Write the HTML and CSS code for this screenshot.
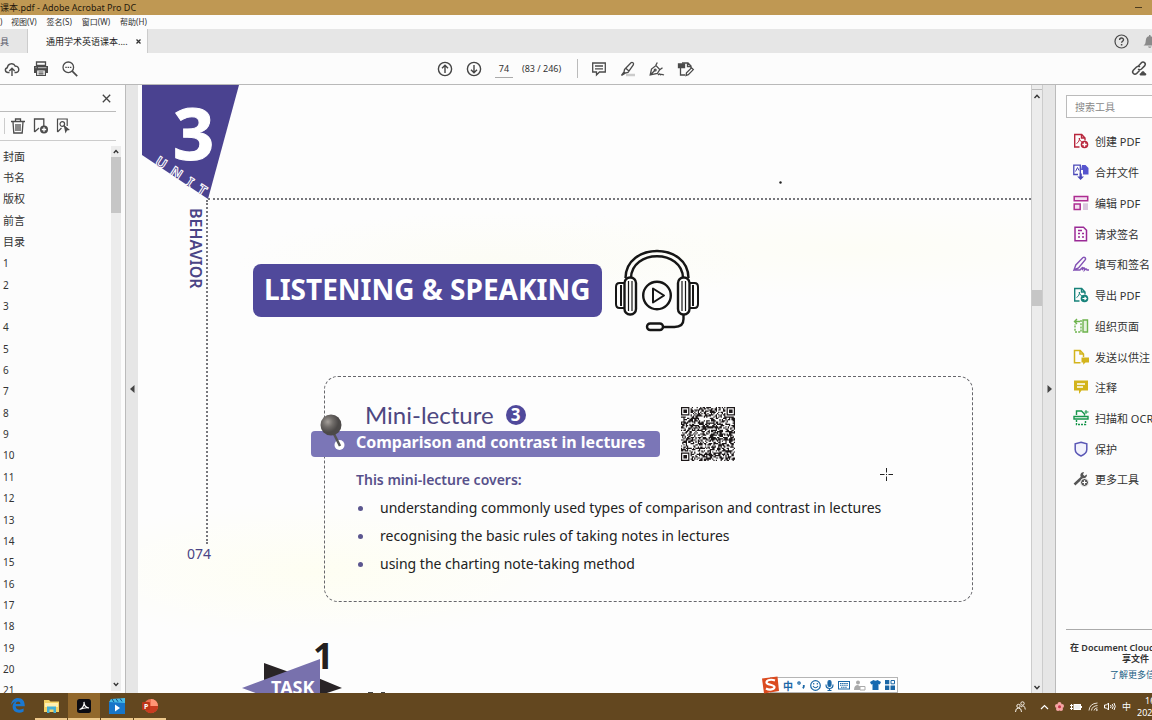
FILE: index.html
```html
<!DOCTYPE html>
<html lang="zh-CN">
<head>
<meta charset="utf-8">
<title>课本.pdf - Adobe Acrobat Pro DC</title>
<link rel="stylesheet" href="styles.css">
</head>
<body>
<div class="app">
  <header class="titlebar"><span>课本.pdf - Adobe Acrobat Pro DC</span><button class="minimize" aria-label="最小化"></button></header>
  <nav class="menubar"><span class="menu-rest">)</span><button>视图(V)</button><button>签名(S)</button><button>窗口(W)</button><button>帮助(H)</button></nav>
  <div class="tabs">
    <button class="tab-tools">具</button>
    <div class="tab-file"><span>通用学术英语课本....</span><button class="tab-close" aria-label="关闭"><svg width="5" height="5" viewBox="0 0 5 5"><path d="M.5.5l4 4M4.500.5l-4 4" stroke="#333" stroke-width="1.300"/></svg></button></div>
    <div class="tab-right">
      <button aria-label="帮助"><svg width="15" height="15" viewBox="0 0 15 15" fill="none" stroke="#484848" stroke-width="1.200"><circle cx="7.500" cy="7.500" r="6.500"/><path d="M5.600 6c0-2.600 3.900-2.500 3.900-.2 0 1.400-1.900 1.500-1.900 3" stroke-width="1.400"/><path d="M7.600 10v1.500" stroke-width="1.500"/></svg></button>
      <button aria-label="通知"><svg width="15" height="15" viewBox="0 0 15 15" fill="#8a8a8a"><path d="M1.500 11.500c2-1 2-3 2.300-5.300C4.100 3.500 5.500 2.500 7 2.200V1h1.500v1.200c1.500.3 2.900 1.300 3.200 4 .3 2.300.3 4.300 2.300 5.300zM6 12.500h3.500c-.5 1.700-3 1.700-3.500 0z"/></svg></button>
    </div>
  </div>
  <div class="toolbar">
    <div class="tools-left">
      <button aria-label="上传"><svg width="16" height="16" viewBox="0 0 16 16" fill="none" stroke="#4b4b4b" stroke-width="1.400"><path d="M5.500 11.500H4C1 11.500.3 7.500 3.300 6.800 3.500 2.500 9.500 1 11.300 5.200c4.200-.5 4.700 6 .9 6.300h-1.700M8 15V7.500M5.300 10L8 7.300l2.700 2.700"/></svg></button>
      <button aria-label="打印"><svg width="16" height="16" viewBox="0 0 16 16"><path d="M3.500 1h9v3.500h-9z" fill="none" stroke="#4b4b4b" stroke-width="1.300"/><path d="M1 5h14v7h-2.500V9h-9v3H1z" fill="#4b4b4b"/><path d="M3.600 9h8.800v5.500H3.600zM5.500 11h5M5.500 12.800h5" fill="none" stroke="#4b4b4b" stroke-width="1.200"/><path d="M2.500 6.700h1M5 6.700h8.500" stroke="#ddd" stroke-width=".8"/></svg></button>
      <button aria-label="查找"><svg width="16" height="16" viewBox="0 0 16 16" fill="none" stroke="#4b4b4b"><circle cx="6.300" cy="6.300" r="5.300" stroke-width="1.300"/><path d="M10.200 10.200l5 5" stroke-width="1.700"/><path d="M3.300 6.300h1.500M5.600 6.300h1.500M7.900 6.300h1.500" stroke-width="1.300"/></svg></button>
    </div>
    <div class="tools-page">
      <button aria-label="上一页"><svg width="16" height="16" viewBox="0 0 16 16" fill="none" stroke="#444" stroke-width="1.400"><circle cx="8" cy="8" r="6.600"/><path d="M8 12V4.500M5 7.300l3-3 3 3"/></svg></button>
      <button aria-label="下一页"><svg width="16" height="16" viewBox="0 0 16 16" fill="none" stroke="#444" stroke-width="1.400"><circle cx="8" cy="8" r="6.600"/><path d="M8 4v7.500M5 8.700l3 3 3-3"/></svg></button>
      <input class="page-number" aria-label="页码" value="74">
      <span class="page-total">(83 / 246)</span>
      <span class="divider"></span>
      <button aria-label="添加附注"><svg width="16" height="16" viewBox="0 0 16 16" fill="none" stroke="#4b4b4b" stroke-width="1.300"><path d="M1.700 2h12.600v9H8.500l-3 3v-3H1.700zM4 5h8M4 7.800h8"/></svg></button>
      <button aria-label="高亮"><svg width="16" height="16" viewBox="0 0 16 16" fill="none" stroke="#4b4b4b" stroke-width="1.300"><path d="M6 14h9" stroke="#ccc" stroke-width="2.500"/><path d="M4.500 8.500L11 1.700c1.300-1 3.300.6 2.300 2.300L8 11.500l-2.800.6L4 11zM6 7.500l3 2.500M4 11l-2.500 3.500 3.700-2.400"/></svg></button>
      <button aria-label="签名"><svg width="16" height="16" viewBox="0 0 16 16" fill="none" stroke="#4b4b4b" stroke-width="1.300"><path d="M1.200 14L2.500 8 7 4.500l3.800 4-2.500 4zM1.200 14L5.500 9.800M6.800 4.300L8.300 1.500M10.800 8.700l2.700-2"/><circle cx="6.200" cy="9" r=".9"/><path d="M9 14c1.500-2 2.500-1 2 0 1-.8 2-.8 4 0"/></svg></button>
      <button aria-label="编辑"><svg width="16" height="16" viewBox="0 0 16 16" fill="none" stroke="#4b4b4b" stroke-width="1.300"><path d="M2.500 6.500V14H7M4 2h6l3 3v2.500M9.500 2v3.500H13"/><path d="M.5 3h6v3.500h-6z" fill="#4b4b4b"/><path d="M8 14.500l.5-2.700 5-5 1.800 1.800-5 5z"/></svg></button>
    </div>
    <button class="share" aria-label="共享链接"><svg width="17" height="17" viewBox="0 0 17 17" fill="none" stroke="#4b4b4b" stroke-width="1.500"><path d="M7.200 6.200l3-3.300c2.300-2.200 5.400.6 3.400 3L10.500 9c-1.300 1-2.600.9-3.400 0M8.500 10.500l-2.800 2.900c-2.300 2.100-5.400-.7-3.400-3.100L5.500 7c1.300-1 2.600-.9 3.400 0"/><path d="M9.500 15.500c-1.300-.1-1.300-2.300.4-2.500.8-2.400 3.700-2 4 0 1.800 0 1.900 2.300.4 2.500z" fill="#4b4b4b" stroke="none"/></svg></button>
  </div>

  <main class="workspace">
    <aside class="bookmarks">
      <div class="bm-head"><button aria-label="关闭书签"><svg width="9" height="9" viewBox="0 0 9 9"><path d="M.8.8l7.400 7.400M8.200.8L.8 8.200" stroke="#444" stroke-width="1.300"/></svg></button></div>
      <div class="bm-tools">
        <span class="bm-divider"></span>
        <button aria-label="删除"><svg width="14" height="16" viewBox="0 0 14 16" fill="none" stroke="#4b4b4b" stroke-width="1.300"><path d="M0 3.500h14M4.500 3.200V1h5v2.200M2 4l.8 11h8.400L12 4M5 6v7M7 6v7M9 6v7"/></svg></button>
        <button aria-label="新建书签"><svg width="16" height="16" viewBox="0 0 16 16" fill="none" stroke="#4b4b4b" stroke-width="1.300"><path d="M1.500 14V1h9.300v7M1.500 14l4.500-4"/><circle cx="11" cy="11.500" r="4" fill="#4b4b4b" stroke="none"/><path d="M11 9.300v4.400M8.800 11.500h4.400" stroke="#fff"/></svg></button>
        <button aria-label="定位书签"><svg width="14" height="16" viewBox="0 0 14 16" fill="none" stroke="#4b4b4b" stroke-width="1.200"><path d="M.5 14V1h9.700v7M.5 14l4-4"/><circle cx="5.300" cy="6" r="2.300"/><path d="M6.500 6.500l6.500 5.500-3 .5-1.500 3z" fill="#4b4b4b" stroke="none"/></svg></button>
      </div>
      <div class="bm-body">
        <ul class="bm-list">
          <li><a href="#">封面</a></li><li><a href="#">书名</a></li><li><a href="#">版权</a></li><li><a href="#">前言</a></li><li><a href="#">目录</a></li>
          <li class="num"><a href="#">1</a></li><li class="num"><a href="#">2</a></li><li class="num"><a href="#">3</a></li><li class="num"><a href="#">4</a></li><li class="num"><a href="#">5</a></li><li class="num"><a href="#">6</a></li><li class="num"><a href="#">7</a></li><li class="num"><a href="#">8</a></li><li class="num"><a href="#">9</a></li><li class="num"><a href="#">10</a></li><li class="num"><a href="#">11</a></li><li class="num"><a href="#">12</a></li><li class="num"><a href="#">13</a></li><li class="num"><a href="#">14</a></li><li class="num"><a href="#">15</a></li><li class="num"><a href="#">16</a></li><li class="num"><a href="#">17</a></li><li class="num"><a href="#">18</a></li><li class="num"><a href="#">19</a></li><li class="num"><a href="#">20</a></li><li class="num"><a href="#">21</a></li>
        </ul>
        <div class="scroll bm-scroll"><svg width="10" height="11" viewBox="0 0 10 11"><path d="M2.800 7L5 4.500 7.200 7" fill="none" stroke="#333" stroke-width="1.300"/></svg><div class="thumb"></div><svg class="down" width="10" height="11" viewBox="0 0 10 11"><path d="M2.800 3L5 5.500 7.200 3" fill="none" stroke="#333" stroke-width="1.300"/></svg></div>
      </div>
    </aside>
    <button class="gutter gutter-left" aria-label="收起书签"><svg width="5" height="8" viewBox="0 0 5 8"><path d="M4.500 0v8L0 4z" fill="#444"/></svg></button>

    <article class="page">
      <div class="page-top">
        <svg class="unit" width="66" height="114" viewBox="0 0 66 114"><path d="M0 0h97L66 114 0 70z" fill="#4a4290"/><text class="unit-number" x="31" y="75">3</text><g class="unit-word"><text transform="translate(12 79) rotate(33)">U</text><text transform="translate(27 89) rotate(33)">N</text><text transform="translate(43 100) rotate(33)">I</text><text transform="translate(54 107) rotate(33)">T</text></g></svg>
        <div class="top-rule"><svg width="3" height="3" viewBox="0 0 3 3"><circle cx="1.500" cy="1.500" r="1.200" fill="#222"/></svg></div>
      </div>
      <div class="page-main">
        <div class="side"><div class="rail"><span>BEHAVIOR</span></div><span class="folio">074</span></div>
        <div class="content">
          <div class="banner-row">
            <h1 class="banner">LISTENING &amp; SPEAKING</h1>
            <svg width="86" height="82" viewBox="0 0 86 82" fill="none" stroke="#161616" stroke-width="2.400"><path d="M11.500 28C12-8 74-8 74.500 28M17 28C17.500-1 68.500-1 69 28"/><rect x="10.500" y="27.500" width="11.500" height="37" rx="5.500"/><path d="M14.500 31v30M18 31v30" stroke-width="1.200"/><path d="M10 33H5.500Q2 33 2 37v17q0 4 3.500 4H10M7 35v21" stroke-width="2"/><rect x="64" y="27.500" width="11.500" height="37" rx="5.500"/><path d="M68 31v30M71.500 31v30" stroke-width="1.200"/><path d="M76 33h4.500q3.500 0 3.500 4v17q0 4-3.500 4H76M79 35v21" stroke-width="2"/><circle cx="43" cy="45.500" r="13.800"/><path d="M39 38.500v14l11-7z" stroke-width="2" stroke-linejoin="round"/><path d="M69.500 65v4q0 8-9 8H49"/><rect x="33" y="73.500" width="16" height="6.500" rx="3.200"/></svg>
          </div>
          <section class="card">
            <div class="card-top">
              <div class="card-title">
                <h2>Mini-lecture <span class="lecture-no">3</span></h2>
                <div class="ribbon"><svg class="pin" width="30" height="38" viewBox="0 0 30 38"><defs><radialGradient id="ball" cx=".35" cy=".35"><stop offset="0" stop-color="#a49f9a"/><stop offset=".5" stop-color="#706c69"/><stop offset="1" stop-color="#4c4948"/></radialGradient></defs><circle cx="19.500" cy="31" r="5" fill="#fff"/><path d="M13 18l7 14" stroke="#555" stroke-width="2.500"/><circle cx="11" cy="11" r="10.500" fill="url(#ball)"/></svg>Comparison and contrast in lectures</div>
              </div>
              <svg class="qr" id="qr" width="54" height="54" viewBox="0 0 45 45" role="img" aria-label="QR code"></svg>
            </div>
            <h3>This mini-lecture covers:</h3>
            <ul class="points"><li>understanding commonly used types of comparison and contrast in lectures</li><li>recognising the basic rules of taking notes in lectures</li><li>using the charting note-taking method</li></ul>
          </section>
          <svg class="task" width="390" height="54" viewBox="0 0 390 54"><path d="M22 23l25 9-25 14zM76 38l24 10-24 8z" fill="#292426"/><path d="M0 48L78 19v40H30z" fill="#7871ad"/><text class="task-word" x="29" y="54">TASK</text><text class="task-number" x="71" y="29">1</text><g fill="#444"><path d="M126 52h5v1h-5zM139 52h4v1h-4z"/><path d="M148 53h29v1h-29zM184 53h22v1h-22zM216 53h31v1h-31zM257 53h26v1h-26zM290 53h34v1h-34zM334 53h49v1h-49z" fill="#bbb"/></g></svg>
        </div>
      </div>
      <svg class="cursor" width="13" height="13" viewBox="0 0 13 13"><path d="M6.500 0v4.500M6.500 8.500V13M0 6.500h4.500M8.500 6.500H13M6.500 6v1" stroke="#222"/></svg>
    </article>

    <div class="scroll page-scroll"><svg width="12" height="22" viewBox="0 0 12 22"><path d="M0 4.500h10" stroke="#bbb"/><path d="M2.500 13L5 10.300 7.500 13" fill="none" stroke="#333" stroke-width="1.400"/></svg><div class="thumb"></div><svg class="down" width="12" height="11" viewBox="0 0 12 11"><path d="M2.500 4L5 6.700 7.500 4" fill="none" stroke="#333" stroke-width="1.400"/></svg></div>
    <button class="gutter gutter-right" aria-label="收起工具"><svg width="5" height="8" viewBox="0 0 5 8"><path d="M.5 0v8L5 4z" fill="#444"/></svg></button>

    <aside class="toolpane">
      <input class="search" aria-label="搜索工具" placeholder="搜索工具">
      <ul class="tool-list">
        <li><a href="#"><svg viewBox="0 0 16 16" fill="none" stroke="#b8263c" stroke-width="1.400"><path d="M6.500 14H1.700V1.500h7L12 5v2.500M8.500 1.500V5H12" /><path d="M3.500 10.500c2-1 3.300-3.500 2.800-5.500 0 2 1.300 3.500 3.200 4" stroke-width="1"/><circle cx="11.500" cy="11.500" r="3.800" fill="#b8263c" stroke="none"/><path d="M11.500 9.300v4.400M9.300 11.500h4.400" stroke="#fff"/></svg>创建 PDF</a></li>
        <li><a href="#"><svg viewBox="0 0 16 16" fill="none" stroke="#4a48b8" stroke-width="1.300"><path d="M5 10.500H.8V1.200h6.500V10"/><path d="M2.500 7.500l2-4 1.500 3" stroke-width="1"/><path d="M9 1h3.500L15.500 4v6.500H10V6H8z" fill="#5654ce" stroke="none"/><path d="M6.500 9.500h2.300v3H11L7.600 16l-3.400-3.500h2.300z" fill="#4a48b8" stroke="none"/></svg>合并文件</a></li>
        <li><a href="#"><svg viewBox="0 0 16 16" fill="#f3dff0" stroke="#ad2c91" stroke-width="1.500"><path d="M1.200 1.500h13.500v4.300H1.200zM1.200 9h6v5.500h-6z"/><path d="M10 8.300h5V15h-5z" fill="#d9c4dc" stroke="none"/></svg>编辑 PDF</a></li>
        <li><a href="#"><svg viewBox="0 0 16 16" fill="none" stroke="#9a2a96" stroke-width="1.500"><path d="M2 1.200h8.500l3 3v10.500H2zM5 7.500h2M5 11h2M9 7.500h2M9 11h2M5 4.500h4"/></svg>请求签名</a></li>
        <li><a href="#"><svg viewBox="0 0 16 16" fill="none" stroke="#8352b5" stroke-width="1.400"><path d="M1 14l1.800-5L10 1.500c1.500-.8 3 .5 2.500 2L5.500 12zM1 14h6c3-4 3.500-3 2 0 2-3 3-2.500 2.500 0 1-1 2-1.500 2.500 0h2"/></svg>填写和签名</a></li>
        <li><a href="#"><svg viewBox="0 0 16 16" fill="none" stroke="#17827a" stroke-width="1.400"><path d="M6.500 14H1.700V1.500h7L12 5v2.500M8.500 1.500V5H12"/><path d="M3.500 10.500c2-1 3.300-3.500 2.800-5.500 0 2 1.300 3.500 3.200 4" stroke-width="1"/><circle cx="11.500" cy="11.500" r="3.800" fill="#17827a" stroke="none"/><path d="M9.500 11.500h3.500M11.500 9.800l1.700 1.700-1.700 1.700" stroke="#fff" stroke-width="1.100"/></svg>导出 PDF</a></li>
        <li><a href="#"><svg viewBox="0 0 16 16" fill="none" stroke="#6db34d" stroke-width="1.400"><path d="M10 2h4.500v12H10z" fill="#e5f2dd"/><path d="M8 2v12H2V6" stroke-dasharray="2 1.200"/><path d="M2 3.500h5M4 1L1.500 3.500 4 6" /></svg>组织页面</a></li>
        <li><a href="#"><svg viewBox="0 0 16 16" fill="none" stroke="#d3b41c" stroke-width="1.500"><path d="M7.500 13.700H1.500V1.500h5.700L10.500 5v3M7 1.500V5h3.500"/><path d="M8.500 8.500H16v5h-3.500l-2.300 2.300v-2.300H8.500z" fill="#d3b41c" stroke="none"/></svg>发送以供注</a></li>
        <li><a href="#"><svg viewBox="0 0 16 16" fill="#d3b41c"><path d="M1 1.500h14v10H8.500L6 15v-3.500H1z"/><path d="M4 5h8M4 8h6" stroke="#fff" stroke-width="1.300"/></svg>注释</a></li>
        <li><a href="#"><svg viewBox="0 0 16 16" fill="none" stroke="#17964c" stroke-width="1.400"><path d="M3.500 5V1h5l3 3v1.500M1 9V6.500h14V9z"/><path d="M3.500 10v4.500h9V10" stroke-dasharray="2 1"/><path d="M13 0v4M11.500 2h4" stroke-width="1"/></svg>扫描和 OCR</a></li>
        <li><a href="#"><svg viewBox="0 0 16 16" fill="#f2f2fc" stroke="#5a57b5" stroke-width="1.500"><path d="M8 1.200l5.800 1.600v5.700q0 4-5.800 6.500Q2.200 12.500 2.200 8.500V2.800z"/></svg>保护</a></li>
        <li><a href="#"><svg viewBox="0 0 16 16" fill="none" stroke="#555" stroke-width="2.500"><path d="M1.500 13.500L9 6.500"/><path d="M13.500 3.500l-2 1.500L10 3.500 11 1C8 1 6.500 4 8 6.200s5.800 1.300 6-2.200z" fill="#555" stroke="none"/><circle cx="11.500" cy="11.500" r="4" fill="#555" stroke="#fff" stroke-width="1"/><path d="M11.500 9.300v4.400M9.300 11.500h4.400" stroke="#fff" stroke-width="1.200"/></svg>更多工具</a></li>
      </ul>
      <div class="cloud"><p>在 Document Cloud</p><p class="cloud-second">享文件</p><a href="#">了解更多信</a></div>
    </aside>
  </main>

  <div class="ime">
    <svg class="sogou" width="19" height="18" viewBox="0 0 19 18"><path d="M1 2.500L16.500.5 18 15 3 17.500z" fill="#db4b20"/><path d="M14 4.500C10 3 5.500 4 5.500 6.500s8 2 8 4.500-5 3.500-8.500 1.500" fill="none" stroke="#fff" stroke-width="2.200"/></svg>
    <button>中</button>
    <svg width="9" height="10" viewBox="0 0 9 10" fill="none" stroke="#1b67a6" stroke-width="1.200"><circle cx="2" cy="3" r="1.200"/><path d="M6.800 5v1.500q0 1-1 1.800" stroke-width="1.800"/></svg>
    <svg width="11" height="11" viewBox="0 0 11 11" fill="none" stroke="#1b67a6" stroke-width="1.200"><circle cx="5.500" cy="5.500" r="4.800"/><path d="M3 6q2.500 3.500 5 0M3.700 3v1.500M7.300 3v1.500"/></svg>
    <svg width="9" height="11" viewBox="0 0 9 11" fill="none" stroke="#1b67a6" stroke-width="1.200"><rect x="3" y=".5" width="3" height="6" rx="1.500" fill="#1b67a6"/><path d="M1 4.500q0 4 3.500 4T8 4.500M4.500 8.500V11M2.500 10.500h4"/></svg>
    <svg width="12" height="10" viewBox="0 0 12 10" fill="none" stroke="#1b67a6"><rect x=".5" y="1.500" width="11" height="7.500"/><path d="M2 3.500h8M2 5.300h8M3 7.200h6" stroke-dasharray="1.500 .6" stroke-width="1.100"/></svg>
    <svg width="12" height="11" viewBox="0 0 12 11" fill="#aaa"><circle cx="4" cy="2.500" r="2"/><path d="M0 10q0-5 4-5l3 2v3z"/><path d="M6 6.500h5v3.500H6z" fill="#fff" stroke="#aaa"/></svg>
    <svg width="11" height="10" viewBox="0 0 11 10" fill="#1769b0"><path d="M3.500 0q2 1.500 4 0L11 2 9.800 4.500 8.500 4v6h-6V4l-1.300.5L0 2z"/></svg>
    <svg width="10" height="10" viewBox="0 0 10 10" fill="#1b67a6"><path d="M0 0h4.300v4.300H0zM0 5.500h4.300V10H0zM5.500 5.500H10V10H5.500z"/><path d="M6 .5h3.500v3.300H6z" fill="none" stroke="#1b67a6"/></svg>
  </div>

  <footer class="taskbar">
    <div class="apps">
      <button aria-label="Edge"><svg width="14" height="15" viewBox="0 0 14 15"><path d="M0 7C.5 2.500 3.500 0 7 0c4.500 0 6.800 3 6.800 8.300H4.600c.3 4 5 4.200 8 2.300v3c-4.600 2.600-11 1-11-5 0-2.700 1.600-4.500 3.700-5.400C3 3.500 1 5 0 7zm4.700-1h4.700c-.1-3.300-4.300-3.200-4.700 0z" fill="#1b78d0" fill-rule="evenodd"/></svg></button>
      <button class="open" aria-label="文件资源管理器"><svg width="15" height="14" viewBox="0 0 15 14"><path d="M0 1h5l1.500 1.500H15V13H0z" fill="#f4d267"/><path d="M1 4h13v4H1z" fill="#fff0b0"/><path d="M3 7.500h9V14H9.500v-3.500h-4V14H3z" fill="#43b0d5"/></svg></button>
      <button class="open active" aria-label="Acrobat"><svg width="14" height="14" viewBox="0 0 14 14"><rect width="14" height="14" rx="2.500" fill="#0b0b12"/><path d="M2.500 10.500c3-1 5.200-4.500 4.500-7.500 0 3.500 2 5.500 5 6-3-.7-6 0-9.500 1.500" fill="none" stroke="#fff" stroke-width="1.200"/></svg></button>
      <button class="open" aria-label="视频"><svg width="16" height="16" viewBox="0 0 16 16"><path d="M0 4h16v12H0z" fill="#1876c9"/><path d="M0 4L2 1l14-1v5z" fill="#48bce7"/><path d="M3 1l2 3M7 .7l2 3M11 .4l2 3" stroke="#0d4d89"/><path d="M6 6.500v7l5-3.500z" fill="#fff"/></svg></button>
      <button class="open" aria-label="PowerPoint"><svg width="16" height="14" viewBox="0 0 16 14"><circle cx="9" cy="7" r="7" fill="#ef7052"/><path d="M9 0a7 7 0 0 1 7 7H9z" fill="#ff9575"/><path d="M4 7h12a7 7 0 0 1-12 5z" fill="#c83c20"/><rect y="3" width="8" height="8" rx="1" fill="#bd3518"/><text x="2" y="9.500" class="ppt">P</text></svg></button>
    </div>
    <div class="tray">
      <svg class="people" width="11" height="12" viewBox="0 0 11 12" fill="none" stroke="#f5efe6"><circle cx="3.500" cy="5" r="1.700"/><path d="M.5 11q0-4 3-4t3 4"/><circle cx="7.500" cy="2.500" r="1.700"/><path d="M6 6q3.500-3 4.300 2.500"/></svg>
      <svg width="9" height="6" viewBox="0 0 9 6"><path d="M1 5l3.500-3.500L8 5" fill="none" stroke="#fff" stroke-width="1.200"/></svg>
      <svg width="9" height="9" viewBox="0 0 9 9"><g fill="#f7a5a5"><circle cx="4.500" cy="2" r="2"/><circle cx="2" cy="4" r="2"/><circle cx="7" cy="4" r="2"/><circle cx="3" cy="7" r="2"/><circle cx="6" cy="7" r="2"/></g><circle cx="4.500" cy="4.700" r="1.500" fill="#c8354c"/></svg>
      <svg width="12" height="8" viewBox="0 0 12 8" fill="none" stroke="#fff"><rect x="4" y="1.500" width="6.500" height="5" fill="#eee"/><path d="M11.500 3v2M0 2.500h3M0 5.500h3M1.500 1v6"/></svg>
      <svg width="10" height="9" viewBox="0 0 10 9" fill="none" stroke="#e8dfd3"><path d="M1 8.500Q1.500 1.500 9.500 1M3.500 8.500Q4 4 9.500 3.500M6 8.500q.5-2.500 3.500-2.700"/><circle cx="8.800" cy="8" r=".6"/></svg>
      <svg width="12" height="9" viewBox="0 0 12 9" fill="none" stroke="#fff"><path d="M.5 3h2l2-2v7l-2-2h-2zM6.500 3q1.200 1.500 0 3M8.200 2q2 2.500 0 5M10 1q2.500 3.500 0 7"/></svg>
      <span class="lang">中</span>
      <div class="clock"><span class="time">16</span><span>2022</span></div>
    </div>
  </footer>
</div>
<script src="qr.js"></script>
</body>
</html>
```

FILE: styles.css
```css
* { box-sizing: border-box; }
body { margin: 0; font-family: "Noto Sans", "Noto Sans CJK SC", sans-serif; color: #333; background: #fcfcfc; }
button { border: 0; padding: 0; margin: 0; background: none; font: inherit; color: inherit; display: flex; align-items: center; justify-content: center; }
a { color: inherit; text-decoration: none; }
ul, p, h1, h2, h3 { margin: 0; padding: 0; list-style: none; }
svg { display: block; flex: none; overflow: visible; }
.app { position: relative; display: flex; flex-direction: column; height: 100vh; overflow: hidden; }

.titlebar { display: flex; justify-content: space-between; align-items: center; height: 15px; background: #bf9853; color: #1f180c; font-size: 9px; line-height: 15px; padding-right: 10px; white-space: nowrap; }
.minimize { width: 7px; height: 1px; background: #4c3c1f; }
.menubar { display: flex; gap: 10px; height: 14px; font-size: 8px; line-height: 14px; color: #333; }
.menu-rest { width: 1px; }
.tabs { display: flex; height: 24px; background: #e6e6e6; font-size: 9px; color: #222; }
.tab-tools { width: 28px; padding-right: 18px; border-right: 1px solid #ccc; color: #556; }
.tab-file { display: flex; align-items: center; width: 120px; padding-left: 18px; background: #fcfcfc; border-right: 1px solid #ccc; white-space: nowrap; }
.tab-close { margin-left: auto; margin-right: 6px; }
.tab-right { display: flex; gap: 13px; margin-left: auto; margin-right: -5px; }
.toolbar { display: flex; align-items: center; height: 32px; border-bottom: 1px solid #b9b9b9; }
.tools-left { display: flex; gap: 13px; padding-left: 4px; }
.tools-page { display: flex; align-items: center; gap: 13px; margin-left: 359px; font-size: 9px; }
.page-number { width: 18px; height: 18px; border: 0; border-bottom: 1px solid #aaa; padding: 0; text-align: center; background: none; font: inherit; color: #333; }
.page-total { margin: 0 3px 0 -4px; white-space: nowrap; }
.divider { width: 1px; height: 19px; background: #bbb; }
.share { margin-left: auto; margin-right: 4px; }

.workspace { flex: 1; display: flex; min-height: 0; }
.bookmarks { width: 126px; display: flex; flex-direction: column; border-right: 1px solid #bbb; }
.bm-head { display: flex; justify-content: flex-end; height: 27px; margin-right: 9px; padding-right: 5px; border-bottom: 1px solid #bbb; }
.bm-tools { display: flex; align-items: center; gap: 8px; height: 29px; margin-right: 9px; padding-left: 4px; border-bottom: 1px solid #ccc; }
.bm-divider { width: 1px; height: 16px; margin-right: -2px; background: #ccc; }
.bm-body { flex: 1; display: flex; min-height: 0; overflow: hidden; padding-top: 5px; }
.bm-list { flex: 1; display: flex; flex-direction: column; margin-bottom: -8px; padding-left: 3px; font-size: 11px; }
.bm-list li { flex: 1; min-height: 0; display: flex; align-items: center; line-height: 16px; }
.bm-list .num { font-size: 10px; }
.scroll { display: flex; flex-direction: column; background: #ececec; }
.scroll .down { margin-top: auto; }
.scroll .thumb { background: #c6c6c6; }
.bm-scroll { width: 10px; margin-right: 4px; margin-bottom: 2px; }
.bm-scroll .thumb { height: 56px; }
.page-scroll { width: 12px; border-left: 1px solid #ccc; border-right: 1px solid #ccc; }
.page-scroll .thumb { height: 16px; margin-top: 183px; }
.gutter { width: 12px; background: #e6e6e6; }
.gutter-right { width: 13px; border-right: 1px solid #bbb; }

.page { position: relative; flex: 1; min-width: 0; overflow: hidden; display: flex; flex-direction: column; background: radial-gradient(ellipse 260px 70px at 20% 80%, #fefef2, transparent), radial-gradient(ellipse 340px 50px at 80% 27%, #fdfdf6, transparent), radial-gradient(ellipse 260px 50px at 40% 29%, #fcfcf5, transparent), #fdfdfd; }
.page-top { flex: none; display: flex; height: 115px; padding-left: 4px; }
.unit { z-index: 1; }
.unit-number { font: bold 72px "Noto Sans", sans-serif; fill: #fff; stroke: #fff; stroke-width: 1px; }
.unit-word { font: bold 14px "Noto Sans", sans-serif; fill: #4a4290; stroke: #fff; stroke-width: 1px; }
.top-rule { flex: 1; border-bottom: 2px dotted #77777c; padding: 96px 0 0 571px; }
.page-main { display: flex; }
.side { flex: none; width: 70px; color: #4a4486; }
.rail { height: 344px; border-right: 2px dotted #77777c; padding: 8px 2px 0 0; display: flex; justify-content: flex-end; align-items: flex-start; }
.rail span { writing-mode: vertical-rl; font-size: 16px; line-height: 16px; font-weight: 600; }
.folio { display: block; margin-right: -3px; text-align: right; font-size: 14px; line-height: 20px; }
.content { flex: 1; min-width: 0; }
.banner-row { display: flex; align-items: center; gap: 12px; padding: 50px 0 0 45px; }
.banner { margin-bottom: 2px; padding: 0 11px 2px; border-radius: 8px; background: #50499b; color: #fff; font-size: 28px; line-height: 51px; font-weight: 700; white-space: nowrap; width: 349px; }
.card { height: 226px; margin: 44px 58px 0 116px; border: 1px dashed #66666b; border-radius: 14px; }
.card-top { display: flex; gap: 21px; margin-left: -14px; padding-top: 24px; }
.card-title { width: 349px; }
.card h2 { display: flex; align-items: center; gap: 12px; padding: 0 0 3px 54px; font: 400 24px/27px Lato, sans-serif; color: #4d4781; }
.lecture-no { width: 20px; height: 20px; border-radius: 50%; background: #50499b; color: #fff; font: 700 17px/20px "Noto Sans", sans-serif; text-align: center; }
.ribbon { position: relative; height: 26px; padding-left: 45px; border-radius: 4px; background: #7b76b7; color: #fff; font-size: 16px; line-height: 23px; font-weight: 700; white-space: nowrap; }
.pin { position: absolute; left: 9px; top: -17px; }
.qr { margin-top: 6px; }
.card h3 { padding: 8px 0 0 31px; color: #57518b; font-size: 14px; line-height: 22px; font-weight: 600; }
.points { padding: 3px 0 0 31px; color: #222; font-size: 14px; }
.points li { display: flex; align-items: center; line-height: 28px; white-space: nowrap; }
.points li::before { content: ""; width: 5px; height: 5px; margin: 0 17px 0 2px; border-radius: 50%; background: #5b568f; }
.task { margin: 38px 0 0 34px; }
.task-word { font: bold 18px "Noto Sans", sans-serif; fill: #fff; }
.task-number { font: bold 36px "Noto Sans", sans-serif; fill: #231f20; stroke: #fff; stroke-width: 3px; paint-order: stroke; }
.cursor { position: absolute; left: 742px; top: 383px; }

.toolpane { width: 96px; display: flex; flex-direction: column; overflow: hidden; padding-left: 10px; }
.search { flex: none; width: 110px; height: 23px; margin: 10px 0 8px; border: 1px solid #bbb; padding: 0 8px; background: #fff; font: 10px "Noto Sans", "Noto Sans CJK SC", sans-serif; }
.search::placeholder { color: #888; }
.tool-list { flex: 11; display: flex; flex-direction: column; }
.tool-list li { flex: 1; display: flex; align-items: center; font-size: 11px; }
.tool-list a { display: flex; align-items: center; gap: 6px; padding-left: 7px; white-space: nowrap; }
.tool-list svg { width: 16px; height: 16px; }
.toolpane::after { content: ""; order: 1; flex: 4; }
.cloud { order: 2; flex: none; height: 64px; border-top: 1px solid #aaa; padding: 12px 0 0 4px; font-size: 9px; line-height: 11px; font-weight: 600; white-space: nowrap; }
.cloud-second { padding-left: 52px; }
.cloud a { display: block; padding: 5px 0 0 40px; color: #175c84; font-weight: 400; }

.ime { position: absolute; left: 770px; bottom: 27px; display: flex; align-items: center; gap: 4px; width: 128px; height: 16px; padding-left: 12px; border: 1px solid #b5b5b5; background: #fff; color: #1b67a6; font-size: 10px; font-weight: 700; }
.sogou { position: absolute; left: -10px; top: -2px; }
.taskbar { display: flex; justify-content: space-between; height: 27px; background: #63471f; color: #fff; }
.apps { display: flex; gap: 1px; padding-left: 2px; }
.apps button { width: 32px; border-bottom: 2px solid transparent; }
.apps .open { border-color: #eec98c; }
.apps .active { background: #92682c; }
.ppt { font: bold 7px "Noto Sans", sans-serif; fill: #fff; }
.tray { display: flex; align-items: center; gap: 6px; font-size: 9px; }
.people { margin-right: 8px; }
.clock { width: 15px; display: flex; flex-direction: column; line-height: 12px; white-space: nowrap; overflow: hidden; }
.time { padding-left: 8px; }
```

FILE: qr.js
```js
(function () {
  var size = 45, seed = 7, path = "";
  function next() { seed = (seed * 1103515245 + 12345) % 2147483648; return seed / 2147483648; }
  function inFinder(x, y) { return (x < 8 && y < 8) || (x > size - 9 && y < 8) || (x < 8 && y > size - 9); }
  for (var y = 0; y < size; y++) {
    for (var x = 0; x < size; x++) {
      if (!inFinder(x, y) && next() < 0.53) path += "M" + x + " " + y + "h1v1h-1z";
    }
  }
  [[0, 0], [size - 7, 0], [0, size - 7]].forEach(function (p) {
    path += "M" + p[0] + " " + p[1] + "h7v7h-7zm1 1v5h5v-5zm1 1h3v3h-3z";
  });
  document.getElementById("qr").innerHTML = '<path fill="#1c1718" d="' + path + '"/>';
})();
```
